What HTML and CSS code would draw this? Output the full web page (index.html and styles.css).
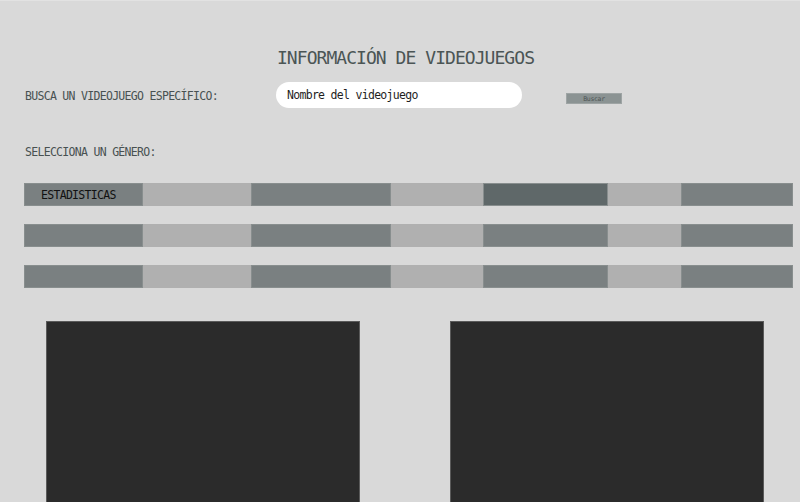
FILE: index.html
```html
<!DOCTYPE html>
<html lang="es">
<head>
  <meta charset="UTF-8">
  <meta name="viewport" content="width=device-width, initial-scale=1.0">
  <title>Información de videojuegos</title>
  <link rel="stylesheet" href="styles.css">
</head>
<body>
<div class="page">
  <h1 class="title">INFORMACIÓN DE VIDEOJUEGOS</h1>

  <div class="search-row">
    <label class="label" for="buscar">BUSCA UN VIDEOJUEGO ESPECÍFICO:</label>
    <input type="text" id="buscar" class="search-input" placeholder="Nombre del videojuego">
    <button class="search-btn">Buscar</button>
  </div>

  <p class="label genre-label">SELECCIONA UN GÉNERO:</p>

  <div class="genres">
    <div class="genre-row">
      <button class="genre c1">ESTADISTICAS</button>
      <button class="genre c3"></button>
      <button class="genre c5 active"></button>
      <button class="genre c7"></button>
    </div>
    <div class="genre-row">
      <button class="genre c1"></button>
      <button class="genre c3"></button>
      <button class="genre c5"></button>
      <button class="genre c7"></button>
    </div>
    <div class="genre-row">
      <button class="genre c1"></button>
      <button class="genre c3"></button>
      <button class="genre c5"></button>
      <button class="genre c7"></button>
    </div>
  </div>

  <div class="panels">
    <div class="panel"></div>
    <div class="panel"></div>
  </div>
</div>
</body>
</html>
```

FILE: styles.css
```css
body {
  margin: 0;
  background-color: #d9d9d9;
  font-family: "DejaVu Sans Mono", "Liberation Mono", monospace;
  border-top: 1px solid #e2e2e2;
  overflow: hidden;
}
.page {
  padding: 0 6px 0 24px;
}
.title {
  margin: 47px 7px 0 0;
  font-size: 18px;
  line-height: 20px;
  font-weight: normal;
  letter-spacing: -0.95px;
  text-align: center;
  color: #4b5555;
}
.label {
  font-size: 11.5px;
  line-height: 14px;
  letter-spacing: -0.7px;
  color: #485151;
}
.search-row {
  display: flex;
  align-items: center;
  margin-top: 14px;
  height: 26px;
}
.search-row .label {
  width: 251px;
  padding-left: 1px;
  padding-top: 2px;
}
.search-input {
  width: 246px;
  height: 26px;
  box-sizing: border-box;
  border: none;
  border-radius: 13px;
  background-color: #fff;
  padding: 0 0 0 11px;
  font-family: inherit;
  font-size: 11.5px;
  letter-spacing: -0.7px;
  outline: none;
}
.search-input::placeholder {
  color: #1e1e1e;
}
.search-btn {
  margin: 7px 0 0 44px;
  width: 56px;
  height: 11px;
  padding: 0;
  border: 1px solid #9ea4a4;
  background-color: #8b9393;
  color: #4e5656;
  font-family: inherit;
  font-size: 6.5px;
  line-height: 8px;
  letter-spacing: -0.3px;
}
.genre-label {
  margin: 37px 0 0 1px;
}
.genres {
  margin-top: 24px;
  display: flex;
  flex-direction: column;
  gap: 18px;
}
.genre-row {
  display: grid;
  grid-template-columns: 119px 108px 140px 92px 125px 73px 112px;
  height: 23px;
  background-color: #b0b0b0;
  width: 769px;
}
.genre {
  border: 1px solid #888e8e;
  background-color: #7a8081;
  padding: 0 0 0 16px;
  text-align: left;
  font-family: inherit;
  font-size: 11.5px;
  letter-spacing: -0.7px;
  color: #111;
}
.genre.active {
  background-color: #5f6869;
}
.c1 { grid-column: 1; }
.c3 { grid-column: 3; }
.c5 { grid-column: 5; }
.c7 { grid-column: 7; }
.panels {
  margin: 33px 0 0 22px;
  display: flex;
  gap: 90px;
}
.panel {
  width: 314px;
  height: 200px;
  box-sizing: border-box;
  background-color: #2b2b2b;
  border: 1px solid #5a5a5a;
}
```
